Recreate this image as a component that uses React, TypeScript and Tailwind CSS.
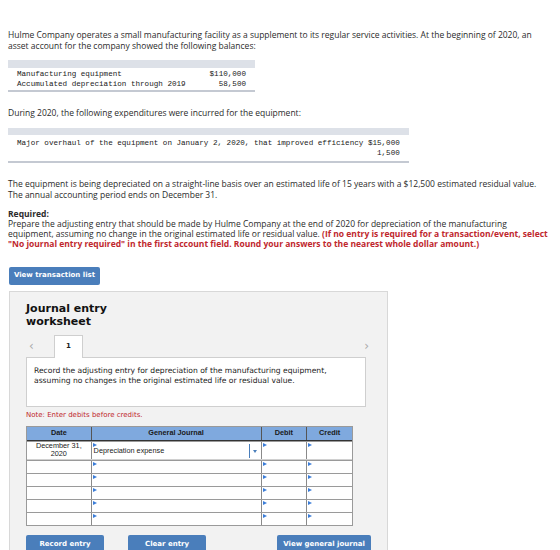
import React from "react";

const sans = { fontFamily: '"Open Sans", "Liberation Sans", Arial, sans-serif' };
const arial = { fontFamily: '"Liberation Sans", Arial, sans-serif' };
const mono = { fontFamily: '"Liberation Mono", "Courier New", monospace' };
const verdana = { fontFamily: '"DejaVu Sans", Verdana, sans-serif' };

function Marker() {
  return (
    <span className="absolute left-[1px] top-[1px] w-0 h-0 border-y-[2.5px] border-y-transparent border-l-[4px] border-l-[#3b7dd8]" />
  );
}

function Cell({ w, children, marker = true, last = false }: { w: string; children?: React.ReactNode; marker?: boolean; last?: boolean }) {
  return (
    <div className={`relative ${w} ${last ? "" : "border-r border-r-[#8a8a8a]"} flex items-center`}>
      {marker && <Marker />}
      {children}
    </div>
  );
}

function Row({ first = false }: { first?: boolean }) {
  return (
    <div className={`flex ${first ? "h-[18px]" : "h-[13px]"} border-t border-t-[#9a9a9a] bg-white`}>
      <Cell w="w-[65px]" marker={false}>
        {first && (
          <div className="w-full text-center text-[7.3px] leading-[8px] text-[#222]" style={arial}>
            December 31,
            <br />
            2020
          </div>
        )}
      </Cell>
      <Cell w="w-[171px]">
        {first && (
          <>
            <span className="pl-[2px] pt-[2px] text-[7.3px] text-[#222]" style={arial}>Depreciation expense</span>
            <span className="absolute right-[11px] top-[2px] h-[14px] w-px bg-[#4a7ebb]" />
            <span className="absolute right-[4px] top-[8px] w-0 h-0 border-x-[2.5px] border-x-transparent border-t-[3px] border-t-[#4a7ebb]" />
          </>
        )}
      </Cell>
      <Cell w="w-[46px]" />
      <Cell w="w-[45px]" last />
    </div>
  );
}

function BlueButton({ label, w, ml = "" }: { label: string; w: string; ml?: string }) {
  return (
    <button
      className={`${w} ${ml} shrink-0 block h-[18px] rounded-[2px] bg-[#4a7ebb] text-white text-[7px] leading-[18px] font-bold`}
      style={verdana}
    >
      {label}
    </button>
  );
}

export default function App() {
  return (
    <div className="w-[560px] h-[550px] overflow-hidden bg-white text-[#2b2b2b]" style={sans}>
      <div className="pl-[8px] pr-[8px] pt-[30px]">
        <p className="text-[8.5px] leading-[10.5px]">
          Hulme Company operates a small manufacturing facility as a supplement to its regular service activities. At the beginning of 2020, an asset account for the company showed the following balances:
        </p>

        <div className="mt-[9px] w-[247px]">
          <div className="h-[8px] bg-[#dde1e8]" />
          <div className="px-[9px] pt-[1px] pb-[1px] text-[7.6px] leading-[10px] text-[#1a1a1a]" style={mono}>
            <div className="flex justify-between">
              <span>Manufacturing equipment</span>
              <span>$110,000</span>
            </div>
            <div className="flex justify-between">
              <span>Accumulated depreciation through 2019</span>
              <span>58,500</span>
            </div>
          </div>
          <div className="h-[2px] bg-[#c4c9d2]" />
        </div>

        <p className="mt-[16px] text-[8.5px] leading-[10.5px]">
          During 2020, the following expenditures were incurred for the equipment:
        </p>

        <div className="mt-[9px] inline-block">
          <div className="h-[7px] bg-[#dde1e8]" />
          <div className="px-[9px] pt-[3px] pb-[3px] text-[7.6px] leading-[10px] text-[#1a1a1a] whitespace-pre" style={mono}>
            <div>Major overhaul of the equipment on January 2, 2020, that improved efficiency $15,000</div>
            <div className="text-right">1,500</div>
          </div>
          <div className="h-[2px] bg-[#c4c9d2]" />
        </div>

        <p className="mt-[15px] text-[8.5px] leading-[11px]">
          The equipment is being depreciated on a straight-line basis over an estimated life of 15 years with a $12,500 estimated residual value. The annual accounting period ends on December 31.
        </p>

        <p className="mt-[9px] text-[8.5px] leading-[10px] font-bold">Required:</p>
        <p className="text-[8.5px] leading-[10px]">
          Prepare the adjusting entry that should be made by Hulme Company at the end of 2020 for depreciation of the manufacturing equipment, assuming no change in the original estimated life or residual value.{" "}
          <span className="font-bold text-[#c0272d]">
            (If no entry is required for a transaction/event, select "No journal entry required" in the first account field. Round your answers to the nearest whole dollar amount.)
          </span>
        </p>

        <button
          className="mt-[18px] ml-[1px] block w-[91px] h-[18px] rounded-[2px] bg-[#4a7ebb] text-white text-[7px] font-bold"
          style={verdana}
        >
          View transaction list
        </button>

        <div className="mt-[6px] ml-[1px] w-[379px] h-[300px] border border-[#d8d8d8] bg-[#f2f2f2] pl-[16px]">
          <h2 className="mt-[10px] text-[11px] leading-[13px] font-bold text-[#111]" style={verdana}>
            Journal entry
            <br />
            worksheet
          </h2>

          <div className="mt-[8px] flex items-end h-[22px] w-[340px] relative">
            <span className="absolute left-[3px] top-[1px] text-[12px] text-[#aaa]" style={verdana}>&lsaquo;</span>
            <div className="ml-[28px] w-[29px] h-[23px] bg-white border border-[#cfcfcf] border-b-0 relative z-10 flex items-center justify-center text-[7px] font-bold text-[#222]" style={verdana}>
              1
            </div>
            <span className="absolute right-[-3px] top-[1px] text-[12px] text-[#aaa]" style={verdana}>&rsaquo;</span>
          </div>

          <div className="w-[340px] h-[50px] bg-white border border-[#cfcfcf] -mt-px px-[7px] pt-[8px] text-[7.6px] leading-[10px] text-[#222]" style={verdana}>
            Record the adjusting entry for depreciation of the manufacturing equipment,
            <br />
            assuming no changes in the original estimated life or residual value.
          </div>

          <p className="mt-[3px] text-[7px] leading-[10px] text-[#c0272d]" style={verdana}>
            Note: Enter debits before credits.
          </p>

          <div className="mt-[6px] w-[327px] border border-[#9a9a9a]">
            <div className="flex h-[14px] bg-[#7fa9de] border-b border-b-[#333] text-[7.3px] font-bold text-[#1a1a1a]" style={arial}>
              <div className="w-[65px] border-r border-r-[#555] flex items-center justify-center">Date</div>
              <div className="w-[171px] border-r border-r-[#555] flex items-center justify-center">General Journal</div>
              <div className="w-[46px] border-r border-r-[#555] flex items-center justify-center">Debit</div>
              <div className="w-[45px] flex items-center justify-center">Credit</div>
            </div>
            <Row first />
            <div className="h-[1px] bg-[#d0d0d0]" />
            <Row />
            <Row />
            <Row />
            <Row />
            <Row />
          </div>

          <div className="mt-[9px] flex items-start">
            <BlueButton label="Record entry" w="w-[78px]" />
            <BlueButton label="Clear entry" w="w-[78px]" ml="ml-[24px]" />
            <BlueButton label="View general journal" w="w-[94px]" ml="ml-[71px]" />
          </div>
        </div>
      </div>
    </div>
  );
}
